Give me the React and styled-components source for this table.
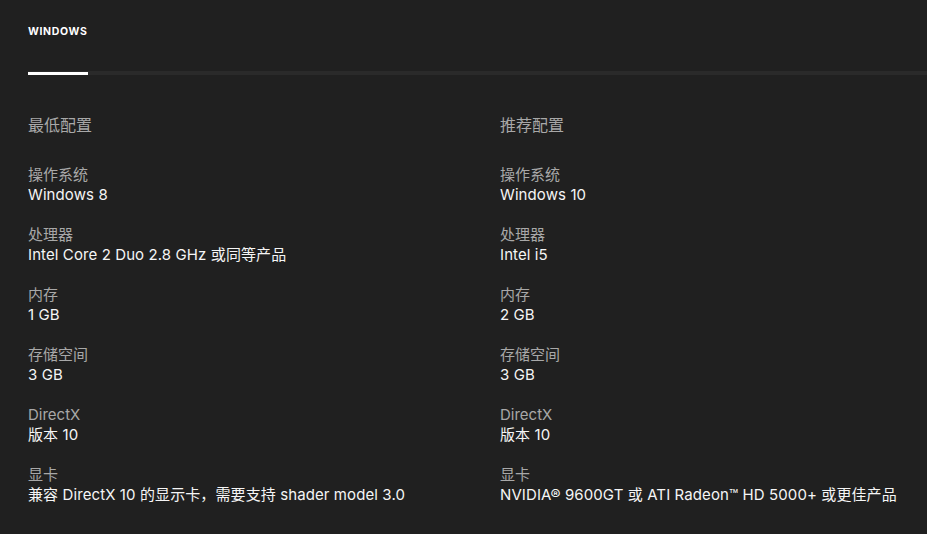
import React from "react";
import styled, { createGlobalStyle } from "styled-components";

const GlobalStyle = createGlobalStyle`
  html, body {
    margin: 0;
    background: #202020;
  }
  body {
    font-family: Inter, "Noto Sans CJK SC", sans-serif;
    -webkit-font-smoothing: antialiased;
  }
`;

const Page = styled.div`
  width: 100%;
  min-height: 534px;
  background: #202020;
  color: #f5f5f5;
`;

const TabList = styled.div`
  display: flex;
  margin-left: 28px;
  border-bottom: 4px solid #2a2a2a;
`;

const Tab = styled.div`
  width: 60px;
  padding: 25px 0 33px;
  margin-bottom: -4px;
  font-size: 10.5px;
  line-height: 14px;
  font-weight: 700;
  letter-spacing: 0.06em;
  text-transform: uppercase;
  color: #ffffff;
  border-bottom: 3px solid ${(props) => (props.active ? "#ffffff" : "transparent")};
  box-sizing: content-box;
`;

const Columns = styled.div`
  display: grid;
  grid-template-columns: 472px 1fr;
  padding: 40px 0 0 28px;
`;

const Column = styled.div`
  display: flex;
  flex-direction: column;
`;

const Heading = styled.div`
  font-size: 16px;
  line-height: 20px;
  color: #a8a8a8;
  margin-bottom: 30px;
`;

const Spec = styled.div`
  display: flex;
  flex-direction: column;
  margin-bottom: 20px;
`;

const Label = styled.div`
  font-size: 15px;
  line-height: 20px;
  color: #a8a8a8;
`;

const Value = styled.div`
  font-size: 15px;
  line-height: 20px;
  letter-spacing: 0.1px;
  color: #f5f5f5;
  white-space: nowrap;
`;

const minimum = [
  ["操作系统", "Windows 8"],
  ["处理器", "Intel Core 2 Duo 2.8 GHz 或同等产品"],
  ["内存", "1 GB"],
  ["存储空间", "3 GB"],
  ["DirectX", "版本 10"],
  ["显卡", "兼容 DirectX 10 的显示卡，需要支持 shader model 3.0"],
];

const recommended = [
  ["操作系统", "Windows 10"],
  ["处理器", "Intel i5"],
  ["内存", "2 GB"],
  ["存储空间", "3 GB"],
  ["DirectX", "版本 10"],
  ["显卡", "NVIDIA® 9600GT 或 ATI Radeon™ HD 5000+ 或更佳产品"],
];

const SpecColumn = ({ title, items }) => (
  <Column>
    <Heading>{title}</Heading>
    {items.map(([label, value]) => (
      <Spec key={label}>
        <Label>{label}</Label>
        <Value>{value}</Value>
      </Spec>
    ))}
  </Column>
);

const App = () => {
  return (
    <Page>
      <GlobalStyle />
      <TabList>
        <Tab active>Windows</Tab>
      </TabList>
      <Columns>
        <SpecColumn title="最低配置" items={minimum} />
        <SpecColumn title="推荐配置" items={recommended} />
      </Columns>
    </Page>
  );
};

export default App;
